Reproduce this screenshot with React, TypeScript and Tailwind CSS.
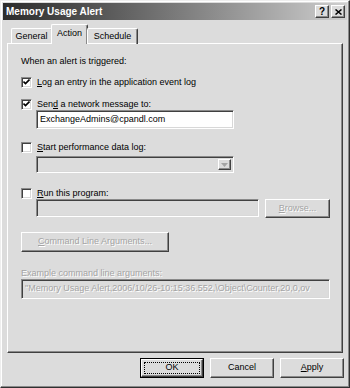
const font = "font-['Liberation_Sans',Arial,sans-serif]";

const raised =
  'border border-t-white border-l-white border-r-[#404040] border-b-[#404040] shadow-[inset_-1px_-1px_0_#8a8a8a]';
const sunken =
  'border border-t-[#8a8a8a] border-l-[#8a8a8a] border-r-white border-b-white shadow-[inset_1px_1px_0_#404040,inset_-1px_-1px_0_#d8d8d8]';
const etched = 'text-[#a4a4a4] [text-shadow:1px_1px_0_#ffffff]';

const Check = ({ on }: { on?: boolean }) => (
  <div className={`w-[11px] h-[11px] shrink-0 bg-white flex items-center justify-center ${sunken}`}>
    {on && (
      <svg width="7" height="7" viewBox="0 0 7 7">
        <path d="M0.5 2.5 L2.5 4.5 L6.5 0.5" stroke="#000" strokeWidth="1.6" fill="none" />
      </svg>
    )}
  </div>
);

const CheckRow = ({ on, children }: { on?: boolean; children: React.ReactNode }) => (
  <div className="h-[12px] flex items-center gap-[5px]">
    <Check on={on} />
    <span className="leading-[12px]">{children}</span>
  </div>
);

const Btn = ({ children, className = '' }: { children: React.ReactNode; className?: string }) => (
  <div className={`flex items-center justify-center bg-[#dcdcdc] ${raised} ${className}`}>{children}</div>
);

export default function App() {
  return (
    <div
      className={`${font} w-[350px] h-[388px] bg-[#dcdcdc] text-[9px] text-black flex flex-col p-[2px] border border-t-[#eeeeee] border-l-[#eeeeee] border-r-[#303030] border-b-[#303030] shadow-[inset_-1px_-1px_0_#8a8a8a,inset_1px_1px_0_#ffffff] overflow-hidden`}
    >
      {/* title bar */}
      <div className="h-[17px] flex items-center pl-[3px] pr-[2px] bg-gradient-to-r from-[#2c2c2c] via-[#7a7a7a] to-[#cfcfcf]">
        <span className="text-white font-bold text-[10px] flex-1">Memory Usage Alert</span>
        <Btn className="w-[14px] h-[13px] font-bold text-[10px] leading-none">?</Btn>
        <Btn className="w-[14px] h-[13px] ml-[2px]">
          <svg width="7" height="6" viewBox="0 0 7 6">
            <path d="M0.5 0.5 L6.5 5.5 M6.5 0.5 L0.5 5.5" stroke="#000" strokeWidth="1.5" />
          </svg>
        </Btn>
      </div>

      {/* tabs */}
      <div className="mt-[4px] h-[19px] flex items-end pl-[8px] relative z-10">
        <div className="h-[16px] w-[41px] flex items-center justify-center border-t border-l border-t-white border-l-white border-r border-r-[#404040] rounded-t-[2px] mb-[-1px]">
          General
        </div>
        <div className="h-[20px] w-[37px] flex items-center justify-center bg-[#dcdcdc] border-t border-l border-t-white border-l-white border-r border-r-[#404040] shadow-[inset_-1px_0_0_#8a8a8a] rounded-t-[2px] mb-[-1px] mx-[-1px] pb-[2px]">
          Action
        </div>
        <div className="h-[16px] w-[51px] flex items-center justify-center border-t border-l border-t-white border-l-white border-r border-r-[#404040] shadow-[inset_-1px_0_0_#8a8a8a] rounded-t-[2px] mb-[-1px]">
          Schedule
        </div>
      </div>

      {/* panel */}
      <div className="ml-[4px] w-[336px] h-[310px] border border-t-white border-l-white border-r-[#404040] border-b-[#404040] shadow-[inset_-1px_-1px_0_#8a8a8a] pl-[13px] pt-[11px] flex flex-col">
        <div className="h-[12px] leading-[12px]">When an alert is triggered:</div>

        <div className="mt-[9px]">
          <CheckRow on>
            <span className="underline">L</span>og an entry in the application event log
          </CheckRow>
        </div>
        <div className="mt-[10px]">
          <CheckRow on>
            Sen<span className="underline">d</span> a network message to:
          </CheckRow>
        </div>
        <div className={`ml-[15px] w-[198px] h-[19px] bg-white flex items-center pl-[3px] ${sunken}`}>
          ExchangeAdmins@cpandl.com
        </div>

        <div className="mt-[12px]">
          <CheckRow>
            <span className="underline">S</span>tart performance data log:
          </CheckRow>
        </div>
        <div className={`mt-[3px] ml-[15px] w-[198px] h-[17px] flex justify-end items-stretch p-[2px] ${sunken}`}>
          <Btn className="w-[13px]">
            <svg width="7" height="4" viewBox="0 0 7 4">
              <path d="M0 0 H7 L3.5 4 Z" fill="#a4a4a4" />
            </svg>
          </Btn>
        </div>

        <div className="mt-[14px]">
          <CheckRow>
            <span className="underline">R</span>un this program:
          </CheckRow>
        </div>
        <div className="ml-[15px] flex items-start gap-[6px]">
          <div className={`w-[223px] h-[18px] ${sunken}`} />
          <Btn className={`w-[65px] h-[19px] ${etched}`}>
            <span className="underline">B</span>rowse...
          </Btn>
        </div>

        <Btn className={`mt-[14px] w-[148px] h-[20px] ${etched}`}>
          <span className="underline">C</span>ommand Line Arguments...
        </Btn>

        <div className={`mt-[15px] h-[12px] leading-[12px] ${etched}`}>Example command line arguments:</div>
        <div
          className={`w-[309px] h-[20px] flex items-center pl-[3px] overflow-hidden whitespace-nowrap ${etched} ${sunken}`}
        >
          "Memory Usage Alert,2006/10/26-10:15:36.552,\Object\Counter,20,0,ov
        </div>
      </div>

      {/* dialog buttons */}
      <div className="mt-[5px] flex justify-end gap-[6px] pr-[3px]">
        <div className="w-[64px] h-[20px] border border-black flex">
          <Btn className="flex-1 p-[2px]">
            <div className="w-full h-full border border-dotted border-black flex items-center justify-center">OK</div>
          </Btn>
        </div>
        <Btn className="w-[64px] h-[20px]">Cancel</Btn>
        <Btn className="w-[64px] h-[20px]">
          <span>
            <span className="underline">A</span>pply
          </span>
        </Btn>
      </div>
    </div>
  );
}
